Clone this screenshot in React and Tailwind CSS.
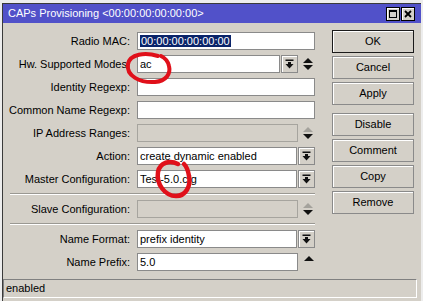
import React from 'react';

const rows = [
    { label: 'Radio MAC:', type: 'full', value: '00:00:00:00:00:00', selected: true },
    { label: 'Hw. Supported Modes:', type: 'dropspin', value: 'ac' },
    { label: 'Identity Regexp:', type: 'full' },
    { label: 'Common Name Regexp:', type: 'full' },
    { label: 'IP Address Ranges:', type: 'spin' },
    { label: 'Action:', type: 'drop', value: 'create dynamic enabled' },
    { label: 'Master Configuration:', type: 'drop', value: 'Test-5.0.cfg' },
    { sep: true },
    { label: 'Slave Configuration:', type: 'spin' },
    { sep: true },
    { label: 'Name Format:', type: 'drop', value: 'prefix identity' },
    { label: 'Name Prefix:', type: 'up', value: '5.0' },
];

const buttons = ['OK', 'Cancel', 'Apply', 'Disable', 'Comment', 'Copy', 'Remove'];

const DropIcon = () => (
    <svg width="9" height="10" viewBox="0 0 9 10" className="fill-[#111]">
        <rect x="0.5" y="0.5" width="8" height="1.5" />
        <rect x="3" y="3" width="3" height="2" />
        <path d="M0.5 5 H8.5 L4.5 9.5 Z" />
    </svg>
);

const Spin = ({ upOnly, disabled }) => (
    <svg width="10" height="12" viewBox="0 0 10 12">
        <path d="M0 5 L5 0 L10 5 Z" className={disabled ? 'fill-[#a4a29c]' : 'fill-[#111]'} />
        {!upOnly && <path d="M0 7 L10 7 L5 12 Z" className="fill-[#111]" />}
    </svg>
);

const Input = ({ value, selected, disabled, className = '' }) => (
    <div
        className={`h-[18px] border px-[2px] text-[11px] leading-[16px] whitespace-nowrap overflow-hidden ${disabled ? 'bg-[#d4d0c8] border-[#a6a49e]' : 'bg-white border-[#8a8a8a]'
            } ${className}`}
    >
        {selected ? <span className="bg-[#0a246a] text-white px-[1px]">{value}</span> : value}
    </div>
);

const DropButton = () => (
    <div className="w-[17px] h-[18px] ml-[1px] border border-[#8a8a8a] bg-[#d4d0c8] shadow-[inset_1px_1px_0_#fff] flex items-center justify-center">
        <DropIcon />
    </div>
);

const Field = ({ row }) => {
    if (row.type === 'full') return <Input value={row.value} selected={row.selected} className="w-full" />;
    if (row.type === 'dropspin')
        return (
            <div className="flex items-center">
                <Input value={row.value} className="w-[143px]" />
                <DropButton />
                <div className="ml-[5px] flex"><Spin /></div>
            </div>
        );
    if (row.type === 'drop')
        return (
            <div className="flex items-center">
                <Input value={row.value} className="flex-1" />
                <DropButton />
            </div>
        );
    if (row.type === 'spin')
        return (
            <div className="flex items-center">
                <Input disabled className="w-[161px]" />
                <div className="ml-[5px] flex"><Spin disabled /></div>
            </div>
        );
    return (
        <div className="flex items-center">
            <Input value={row.value} className="w-[161px]" />
            <div className="ml-[6px] flex"><Spin upOnly /></div>
        </div>
    );
};

const App = () => {
    return (
        <div className="relative w-[423px] h-[301px] overflow-hidden bg-[#ededed] pt-[3px] pl-[2px] font-['Liberation_Sans',Arial,sans-serif] text-[11px] text-black">
            <div className="w-[419px] h-[298px] border-l border-t border-[#3a3a3a] bg-[#d4d0c8] flex flex-col">
                {/* --- Title bar --- */}
                <div className="h-[19px] bg-[#5151c9] flex items-center pl-[5px] pr-[6px] text-white text-[11px]">
                    <span className="flex-1">CAPs Provisioning &lt;00:00:00:00:00:00&gt;</span>
                    <div className="flex gap-[1px]">
                        <div className="w-[14px] h-[14px] border border-black bg-[#d4d0c8] shadow-[inset_1px_1px_0_#fff] flex items-center justify-center">
                            <div className="w-[8px] h-[8px] border border-black border-t-2" />
                        </div>
                        <div className="w-[14px] h-[14px] border border-black bg-[#d4d0c8] shadow-[inset_1px_1px_0_#fff] flex items-center justify-center">
                            <svg width="8" height="8" viewBox="0 0 8 8">
                                <path d="M1 1 L7 7 M7 1 L1 7" stroke="#000" strokeWidth="1.8" />
                            </svg>
                        </div>
                    </div>
                </div>

                {/* --- Body --- */}
                <div className="flex-1 flex">
                    <div className="w-[312px] pt-[9px] flex flex-col gap-[5px]">
                        {rows.map((row, i) =>
                            row.sep ? (
                                <div key={i} className="ml-[7px] w-[305px] h-[2px] border-t border-[#9a9892] border-b border-b-white" />
                            ) : (
                                <div key={i} className="flex items-center h-[18px]">
                                    <div className="w-[127px] text-right whitespace-nowrap">{row.label}</div>
                                    <div className="ml-[7px] w-[178px]">
                                        <Field row={row} />
                                    </div>
                                </div>
                            )
                        )}
                    </div>
                    <div className="ml-[17px] w-[82px] pt-[7px] flex flex-col gap-[3px]">
                        {buttons.map((b) => (
                            <div
                                key={b}
                                className={`h-[23px] flex items-center justify-center border bg-[#d4d0c8] shadow-[inset_1px_1px_0_#fff] ${b === 'OK' ? 'border-[#1a1a1a]' : 'border-[#8a8a8a]'
                                    } ${b === 'Disable' ? 'mt-[5px]' : ''}`}
                            >
                                {b}
                            </div>
                        ))}
                    </div>
                </div>

                {/* --- Status bar --- */}
                <div className="h-[19px] mb-[3px] mr-[4px] border-t border-l border-[#808080] border-b border-r border-b-white border-r-white flex items-center pl-[2px]">
                    enabled
                </div>
            </div>

            {/* --- Red annotations --- */}
            <svg className="absolute inset-0 pointer-events-none" width="423" height="301">
                <path
                    d="M158 56 C145 52, 130 54, 128 64 C126 76, 140 83, 155 82 C166 81, 171 74, 169 66 C168 61, 165 58, 161 56"
                    fill="none"
                    stroke="#e0101a"
                    strokeWidth="4"
                    strokeLinecap="round"
                />
                <path
                    d="M178 164 C170 160, 160 162, 158 172 C156 184, 165 196, 176 196 C186 196, 191 186, 189 176 C188 170, 186 166, 184 164"
                    fill="none"
                    stroke="#e0101a"
                    strokeWidth="4.5"
                    strokeLinecap="round"
                />
            </svg>
        </div>
    );
};

export default App;
